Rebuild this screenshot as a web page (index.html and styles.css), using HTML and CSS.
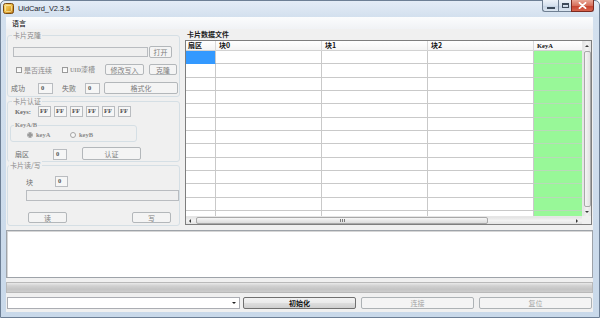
FILE: index.html
```html
<!DOCTYPE html>
<html lang="zh-CN">
<head>
<meta charset="utf-8">
<title>UidCard_V2.3.5</title>
<link rel="stylesheet" href="styles.css">
</head>
<body>
<div class="window">
  <div class="titlebar">
    <svg class="app-icon" width="11" height="11" viewBox="0 0 11 11">
      <defs>
        <linearGradient id="gold" x1="0" y1="0" x2="1" y2="1">
          <stop offset="0" stop-color="#fbe08a"/>
          <stop offset="0.5" stop-color="#e9b53c"/>
          <stop offset="1" stop-color="#b9781a"/>
        </linearGradient>
      </defs>
      <rect x="0.5" y="0.5" width="10" height="10" rx="2" fill="url(#gold)" stroke="#7a4a12"/>
      <rect x="2.5" y="2.5" width="6" height="6" rx="1" fill="none" stroke="#fff3c4" stroke-opacity="0.6"/>
    </svg>
    <span class="title">UidCard_V2.3.5</span>
    <div class="caption">
      <div class="cbtn cmin"><span class="g-min"></span></div>
      <div class="cbtn cmax"><span class="g-max"></span></div>
      <div class="cbtn cclose">
        <svg width="9" height="7" viewBox="0 0 9 7"><path d="M1.5 0.8 L7.5 6.2 M7.5 0.8 L1.5 6.2" stroke="#fff" stroke-width="1.8" stroke-linecap="round"/></svg>
      </div>
    </div>
  </div>

  <div class="client">
    <div class="menubar"><span class="menu-item">语言</span></div>

    <div class="main">
      <div class="left">
        <div class="grp g1">
          <div class="glabel">卡片克隆</div>
          <div class="row r1">
            <div class="tb tb-path"></div>
            <div class="btn b-open">打开</div>
          </div>
          <div class="row r2">
            <div class="chk chk1"><span class="box"></span><span class="lbl">是否连续</span></div>
            <div class="chk chk2"><span class="box"></span><span class="lbl"><span class="lat">UID</span>漆槽</span></div>
            <div class="btn b-write">修改写入</div>
            <div class="btn b-clone">克隆</div>
          </div>
          <div class="row r3">
            <span class="lab l-ok">成功</span>
            <div class="tb tb-num">0</div>
            <span class="lab l-fail">失败</span>
            <div class="tb tb-num">0</div>
            <div class="btn b-format">格式化</div>
          </div>
        </div>

        <div class="grp g2">
          <div class="glabel">卡片认证</div>
          <div class="row r-keys">
            <span class="lat keys-lbl">Keys:</span>
            <div class="tb tb-ff">FF</div>
            <div class="tb tb-ff">FF</div>
            <div class="tb tb-ff">FF</div>
            <div class="tb tb-ff">FF</div>
            <div class="tb tb-ff">FF</div>
            <div class="tb tb-ff">FF</div>
          </div>
          <div class="grp g-inner">
            <div class="glabel lat">KeyA/B</div>
            <div class="row r-radio">
              <div class="rad rad1"><span class="dot on"></span><span class="lat">keyA</span></div>
              <div class="rad rad2"><span class="dot"></span><span class="lat">keyB</span></div>
            </div>
          </div>
          <div class="row r-sector">
            <span class="lab l-sec">扇区</span>
            <div class="tb tb-sec">0</div>
            <div class="btn b-auth">认证</div>
          </div>
        </div>

        <div class="grp g3">
          <div class="glabel gl3">卡片读/写</div>
          <div class="row r-block">
            <span class="lab l-blk">块</span>
            <div class="tb tb-blk">0</div>
          </div>
          <div class="tb tb-data"></div>
          <div class="row r-rw">
            <div class="btn b-read">读</div>
            <div class="btn b-wr">写</div>
          </div>
        </div>
      </div>

      <div class="right">
        <div class="rtitle">卡片数据文件</div>
        <div class="dgv">
          <div class="cells">
            <div class="drow hdr">
              <div class="c c0">扇区</div>
              <div class="c c1">块0</div>
              <div class="c c1">块1</div>
              <div class="c c1">块2</div>
              <div class="c c4 lat">KeyA</div>
            </div>
            <div class="drow"><div class="c c0 sel"></div><div class="c c1"></div><div class="c c1"></div><div class="c c1"></div><div class="c c4 green"></div></div>
            <div class="drow"><div class="c c0"></div><div class="c c1"></div><div class="c c1"></div><div class="c c1"></div><div class="c c4 green"></div></div>
            <div class="drow"><div class="c c0"></div><div class="c c1"></div><div class="c c1"></div><div class="c c1"></div><div class="c c4 green"></div></div>
            <div class="drow"><div class="c c0"></div><div class="c c1"></div><div class="c c1"></div><div class="c c1"></div><div class="c c4 green"></div></div>
            <div class="drow"><div class="c c0"></div><div class="c c1"></div><div class="c c1"></div><div class="c c1"></div><div class="c c4 green"></div></div>
            <div class="drow"><div class="c c0"></div><div class="c c1"></div><div class="c c1"></div><div class="c c1"></div><div class="c c4 green"></div></div>
            <div class="drow"><div class="c c0"></div><div class="c c1"></div><div class="c c1"></div><div class="c c1"></div><div class="c c4 green"></div></div>
            <div class="drow"><div class="c c0"></div><div class="c c1"></div><div class="c c1"></div><div class="c c1"></div><div class="c c4 green"></div></div>
            <div class="drow"><div class="c c0"></div><div class="c c1"></div><div class="c c1"></div><div class="c c1"></div><div class="c c4 green"></div></div>
            <div class="drow"><div class="c c0"></div><div class="c c1"></div><div class="c c1"></div><div class="c c1"></div><div class="c c4 green"></div></div>
            <div class="drow"><div class="c c0"></div><div class="c c1"></div><div class="c c1"></div><div class="c c1"></div><div class="c c4 green"></div></div>
            <div class="drow"><div class="c c0"></div><div class="c c1"></div><div class="c c1"></div><div class="c c1"></div><div class="c c4 green"></div></div>
            <div class="drow"><div class="c c0"></div><div class="c c1"></div><div class="c c1"></div><div class="c c1"></div><div class="c c4 green"></div></div>
          </div>
          <div class="vscroll">
            <span class="arr-up"></span>
            <div class="vthumb"></div>
            <span class="arr-down"></span>
          </div>
          <div class="hscroll">
            <span class="arr-left"></span>
            <div class="hthumb"><span class="grip"></span></div>
            <span class="arr-right"></span>
          </div>
          <div class="corner"></div>
        </div>
      </div>
    </div>

    <div class="log"></div>
    <div class="progress"></div>

    <div class="bottom">
      <div class="combo"><span class="combo-arrow"></span></div>
      <div class="btn2 b-init">初始化</div>
      <div class="btn2 dis">连接</div>
      <div class="btn2 dis">复位</div>
    </div>
  </div>
</div>
</body>
</html>
```

FILE: styles.css
```css
* { box-sizing: border-box; }

body {
  margin: 0;
  width: 600px;
  height: 318px;
  overflow: hidden;
  background: #ffffff;
  font-family: "Noto Sans CJK SC", "Noto Sans", sans-serif;
  font-size: 7px;
  color: #333;
}

.lat {
  font-family: "Liberation Serif", serif;
  font-weight: bold;
}

.window {
  width: 600px;
  height: 318px;
  border: 1px solid #6d7f95;
  border-radius: 5px 5px 0 0;
  background: linear-gradient(#e4ecf6 0, #d3e0ee 16px, #c9d9ea 100%);
  display: flex;
  flex-direction: column;
}

/* title bar */
.titlebar {
  height: 16px;
  display: flex;
  align-items: flex-start;
  padding-left: 2px;
}
.app-icon { margin-top: 2px; flex: none; }
.title {
  margin-left: 4px;
  margin-top: 3px;
  font-family: "Liberation Sans", sans-serif;
  font-size: 7.5px;
  line-height: 9px;
  color: #1e2530;
  letter-spacing: -0.1px;
}
.caption {
  margin-left: auto;
  margin-right: 5px;
  display: flex;
  margin-top: -1px;
}
.cbtn {
  height: 12px;
  border: 1px solid #6f7f92;
  border-top: none;
  display: flex;
  align-items: center;
  justify-content: center;
  background: linear-gradient(#eef3f9, #d6e1ee 50%, #c5d3e4 51%, #dbe5f0);
}
.cmin { width: 16px; border-radius: 0 0 0 3px; border-right: none; }
.cmax { width: 13px; border-right: none; }
.cclose {
  width: 23px;
  border-radius: 0 0 3px 0;
  border-color: #7d2a20;
  background: linear-gradient(#e9a796, #d7705c 50%, #c4412d 51%, #d8644d);
}
.g-min {
  width: 6px; height: 2px;
  margin-top: 4px;
  background: #fff;
  border: 1px solid #3d4a5a;
  box-sizing: content-box;
  height: 0;
}
.g-max {
  width: 7px; height: 5px;
  border: 1px solid #3d4a5a;
  border-top-width: 2px;
  background: transparent;
}

/* client */
.client {
  flex: 1;
  margin: 0 6px 5px 5px;
  background: #f0f0f0;
  display: flex;
  flex-direction: column;
}

.menubar {
  height: 12px;
  background: linear-gradient(#fbfcfd, #f0f2f5);
  display: flex;
  align-items: center;
  padding-left: 6px;
}
.menu-item { color: #111; line-height: 8px; font-weight: 500; }

.main {
  height: 200px;
  display: flex;
  overflow: hidden;
}

.left {
  width: 176px;
  flex: none;
  padding-left: 1px;
}

.grp {
  width: 173px;
  border: 1px solid #d5dfe5;
  border-radius: 3px;
}
.glabel {
  display: table;
  margin: -5px 0 0 4px;
  padding: 0 1px;
  line-height: 8px;
  background: #f0f0f0;
  color: #8a8a8a;
}

.row { display: flex; align-items: center; }

.lab { color: #6e6e6e; line-height: 8px; flex: none; }

.tb {
  flex: none;
  border: 1px solid #b9bcc0;
  background: #f6f6f6;
  font-family: "Liberation Serif", serif;
  font-weight: bold;
  font-size: 6.5px;
  color: #555;
  line-height: 8px;
  padding-left: 2px;
}

.btn {
  flex: none;
  border: 1px solid #b3b7ba;
  border-radius: 2px;
  background: #f4f4f4;
  color: #7d7d7d;
  display: flex;
  align-items: center;
  justify-content: center;
  line-height: 8px;
}

/* group 1 */
.g1 { margin-top: 6px; padding-bottom: 2px; }
.r1 { margin-top: 7px; height: 12px; }
.tb-path { margin-left: 5px; width: 135px; height: 10px; background: #efefef; }
.b-open { margin-left: 1px; width: 23px; height: 12px; }

.r2 { margin-top: 6px; height: 11px; }
.chk { display: flex; align-items: center; flex: none; }
.chk .box {
  width: 6px; height: 6px;
  border: 1px solid #9a9a9a;
  background: linear-gradient(#f2f2f2, #ffffff);
  flex: none;
}
.chk .lbl { margin-left: 2px; color: #8a8a8a; line-height: 8px; white-space: nowrap; }
.chk .lbl .lat { font-size: 6px; color: #999; }
.chk1 { margin-left: 8px; width: 46px; }
.chk2 { width: 43px; }
.b-write { width: 39px; height: 11px; }
.b-clone { margin-left: 5px; width: 28px; height: 11px; }

.r3 { margin-top: 7px; height: 12px; }
.l-ok { margin-left: 3px; width: 27px; }
.tb-num { width: 15px; height: 11px; }
.l-fail { margin-left: 9px; width: 23px; }
.b-format { margin-left: 4px; width: 74px; height: 12px; }

/* group 2 */
.g2 { margin-top: 4px; padding-bottom: 1px; }
.r-keys { margin-top: 1px; height: 11px; }
.keys-lbl {
  margin-left: 7px;
  width: 23px;
  font-size: 6.5px;
  color: #6a6a6a;
  line-height: 8px;
  flex: none;
}
.tb-ff {
  width: 13px;
  height: 11px;
  margin-right: 3px;
  padding-left: 1px;
  color: #505050;
}

.g-inner {
  width: 127px;
  margin: 8px 0 0 2px;
  padding-bottom: 2px;
}
.g-inner .glabel {
  margin-left: 3px;
  font-size: 6.5px;
  color: #8a8a8a;
}
.r-radio { margin-top: 2px; height: 8px; }
.rad { display: flex; align-items: center; flex: none; color: #8a8a8a; }
.rad .lat { font-size: 6.5px; margin-left: 3px; line-height: 8px; }
.rad1 { margin-left: 16px; width: 43px; }
.dot {
  width: 6px; height: 6px;
  border-radius: 50%;
  border: 1px solid #a5a5a5;
  background: #f7f7f7;
  flex: none;
  position: relative;
}
.dot.on { background: radial-gradient(circle, #9a9a9a 0 1.6px, #f7f7f7 1.9px); }

.r-sector { margin-top: 5px; height: 13px; align-items: flex-end; }
.l-sec { margin-left: 7px; width: 38px; margin-bottom: 2px; }
.tb-sec { width: 14px; height: 11px; }
.b-auth { margin-left: 15px; width: 59px; height: 13px; }

/* group 3 */
.g3 { margin-top: 3px; padding-bottom: 2px; }
.gl3 { margin-left: 1px; }
.r-block { margin-top: 7px; height: 11px; }
.l-blk { margin-left: 18px; width: 29px; }
.tb-blk { width: 13px; height: 11px; }
.tb-data { margin: 3px 0 0 18px; width: 153px; height: 11px; background: #efefef; }
.r-rw { margin-top: 11px; height: 11px; }
.b-read { margin-left: 20px; width: 39px; height: 11px; }
.b-wr { margin-left: 65px; width: 39px; height: 11px; }

/* right side */
.right {
  flex: 1;
  display: flex;
  flex-direction: column;
}
.rtitle {
  margin: 1px 0 0 5px;
  line-height: 8px;
  font-weight: bold;
  color: #222;
}
.dgv {
  margin: 2px 1px 0 3px;
  height: 185px;
  border: 1px solid #7e7e7e;
  box-shadow: inset 1px 1px 0 #b5b5b5;
  background: #ffffff;
  display: grid;
  grid-template-columns: 396px 1fr;
  grid-template-rows: 175px 1fr;
}
.cells { overflow: hidden; background: #fff; }
.drow { display: flex; height: 13.34px; }
.drow.hdr { height: 10px; background: linear-gradient(#ffffff, #f3f3f3); }
.c {
  flex: none;
  border-right: 1px solid #c9c9c9;
  border-bottom: 1px solid #c9c9c9;
}
.hdr .c {
  border-bottom-color: #d2d2d2;
  border-right-color: #d9d9d9;
  font-weight: bold;
  color: #111;
  line-height: 9px;
  padding-left: 2px;
}
.hdr .c1 { padding-left: 3px; }
.hdr .c4 { padding-left: 3px; font-size: 6.5px; }
.c0 { width: 30px; }
.c1 { width: 106px; }
.c4 { width: 48px; border-right: none; }
.green { background: #98f898; border-bottom-color: #b9d9b9; }
.sel { background: #3399ff; border-bottom-color: #3399ff; }

.vscroll {
  background: linear-gradient(90deg, #e3e3e3, #f2f2f2 50%, #e3e3e3);
  display: flex;
  flex-direction: column;
  align-items: center;
  border-left: 1px solid #e6e6e6;
}
.arr-up {
  margin-top: 4px;
  width: 0; height: 0;
  border-left: 2px solid transparent;
  border-right: 2px solid transparent;
  border-bottom: 2px solid #3a3a3a;
}
.vthumb {
  margin-top: 4px;
  width: 7px;
  height: 156px;
  border: 1px solid #a8a8a8;
  border-radius: 2px;
  background: linear-gradient(90deg, #f5f5f5, #e2e2e2);
}
.arr-down {
  margin-top: 4px;
  width: 0; height: 0;
  border-left: 2px solid transparent;
  border-right: 2px solid transparent;
  border-top: 2px solid #3a3a3a;
}
.hscroll {
  background: linear-gradient(#e3e3e3, #f2f2f2 50%, #e3e3e3);
  display: flex;
  align-items: center;
  border-top: 1px solid #e6e6e6;
}
.arr-left {
  margin-left: 3px;
  width: 0; height: 0;
  border-top: 2px solid transparent;
  border-bottom: 2px solid transparent;
  border-right: 2px solid #3a3a3a;
}
.hthumb {
  margin-left: 5px;
  width: 292px;
  height: 7px;
  border: 1px solid #a8a8a8;
  border-radius: 2px;
  background: linear-gradient(#f6f6f6, #dcdcdc);
  display: flex;
  align-items: center;
  justify-content: center;
}
.grip {
  width: 5px; height: 3px;
  background: repeating-linear-gradient(90deg, #7a7a7a 0 1px, transparent 1px 2px);
}
.arr-right {
  margin-left: auto;
  margin-right: 4px;
  width: 0; height: 0;
  border-top: 2px solid transparent;
  border-bottom: 2px solid transparent;
  border-left: 2px solid #3a3a3a;
}
.corner { background: #f0f0f0; }

/* bottom part */
.log {
  margin-top: 1px;
  height: 48px;
  background: #ffffff;
  border: 1px solid #9ea3a9;
  box-shadow: inset 1px 1px 0 #d6d6d6;
}
.progress {
  margin-top: 4px;
  height: 11px;
  border: 1px solid #b9b9b9;
  background: linear-gradient(#e9e9e9, #d2d2d2 30%, #c4c4c4 70%, #cdcdcd);
}
.bottom {
  margin-top: 4px;
  height: 12px;
  display: flex;
}
.combo {
  margin-left: 1px;
  width: 233px;
  height: 12px;
  background: #ffffff;
  border: 1px solid #abadb3;
  display: flex;
  align-items: center;
  justify-content: flex-end;
  padding-right: 3px;
}
.combo-arrow {
  width: 0; height: 0;
  border-left: 2px solid transparent;
  border-right: 2px solid transparent;
  border-top: 2px solid #222;
}
.btn2 {
  width: 113px;
  height: 12px;
  margin-left: 5px;
  border-radius: 2px;
  display: flex;
  align-items: center;
  justify-content: center;
  line-height: 8px;
}
.b-init {
  margin-left: 3px;
  border: 1px solid #707070;
  background: linear-gradient(#f2f2f2, #ebebeb 45%, #dddddd 55%, #cfcfcf);
  font-weight: bold;
  color: #111;
}
.dis {
  border: 1px solid #adb2b5;
  background: #f4f4f4;
  color: #a3a3a3;
}
```
